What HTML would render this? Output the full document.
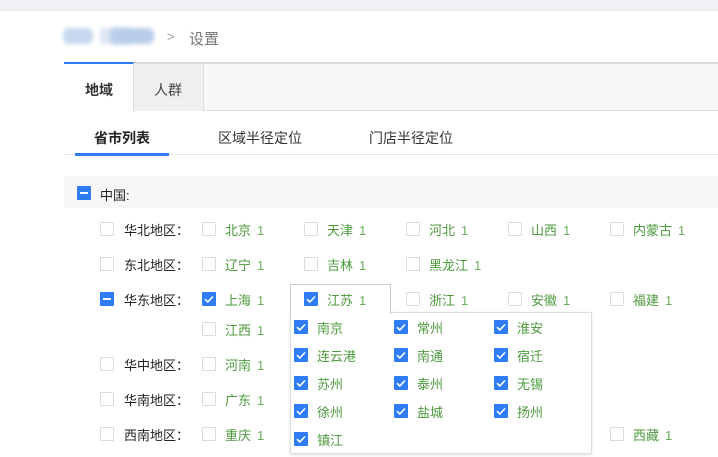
<!DOCTYPE html>
<html><head><meta charset="utf-8">
<style>
*{margin:0;padding:0;box-sizing:border-box}
body{width:718px;height:457px;overflow:hidden;background:#fff;position:relative;font-family:"Liberation Sans","Noto Sans CJK SC",sans-serif;font-size:13px;color:#333}
.a{position:absolute;white-space:nowrap}
.cb{position:absolute;width:14px;height:14px;border:1px solid #dcdcdc;background:#fff;border-radius:1px}
.ck{position:absolute;width:14px;height:14px;background:#2f7df6;border-radius:1px}
.ck svg{position:absolute;left:0;top:0}
.ind{position:absolute;width:14px;height:14px;background:#2f7df6;border-radius:1px}
.ind:after{content:"";position:absolute;left:3px;top:6px;width:8px;height:2px;background:#fff}
.g{color:#4d9a3e}
.n{color:#6ab05a;margin-left:6px}
.lb{color:#222}
</style></head><body>
<div class="a" style="left:0;top:0;width:718px;height:11px;background:#f0f2f5;border-bottom:1px solid #e4e7ed"></div>
<div class="a" style="left:63px;top:28px;width:30px;height:16px;background:#c7d8ee;border-radius:6px;filter:blur(2px)"></div>
<div class="a" style="left:100px;top:28px;width:30px;height:16px;background:#dde6f2;filter:blur(2px)"></div>
<div class="a" style="left:110px;top:28px;width:44px;height:16px;background:#b9cde9;border-radius:6px;filter:blur(2px)"></div>
<div class="a" style="left:167px;top:29px;color:#999;font-size:13px">&gt;</div>
<div class="a" style="left:189px;top:28px;color:#777;font-size:15px">设置</div>
<div class="a" style="left:64px;top:62px;width:654px;height:49px;background:#f7f7f7;border-top:2px solid #d9d9d9;border-bottom:1px solid #ddd"></div>
<div class="a" style="left:64px;top:62px;width:70px;height:50px;background:#fff;border-top:2px solid #2f7df6;border-right:1px solid #ddd"></div>
<div class="a" style="left:134px;top:64px;width:70px;height:47px;background:#efefef;border-right:1px solid #ddd"></div>
<div class="a" style="left:85px;top:80px;font-size:14px;font-weight:bold;color:#333">地域</div>
<div class="a" style="left:154px;top:80px;font-size:14px;color:#444">人群</div>
<div class="a" style="left:64px;top:154px;width:654px;height:1px;background:#e4e4e4"></div>
<div class="a" style="left:75px;top:153px;width:94px;height:3px;background:#2f7df6"></div>
<div class="a" style="left:94px;top:128px;font-size:14px;font-weight:bold;color:#222">省市列表</div>
<div class="a" style="left:218px;top:128px;font-size:14px;color:#333">区域半径定位</div>
<div class="a" style="left:369px;top:128px;font-size:14px;color:#333">门店半径定位</div>
<div class="a" style="left:64px;top:176px;width:654px;height:32px;background:#f7f7f7"></div>
<div class="ind" style="left:77px;top:186px"></div>
<div class="a lb" style="left:100px;top:185px">中国:</div>
<div id="rows"></div>
<script>
var chk='<svg width="14" height="14" viewBox="0 0 14 14"><path d="M3 7.2l2.8 2.8L11 4.5" stroke="#fff" stroke-width="1.6" fill="none"/></svg>';
var h='';
function cb(x,y,t){ if(t==1) return '<div class="ck" style="left:'+x+'px;top:'+y+'px">'+chk+'</div>'; if(t==2) return '<div class="ind" style="left:'+x+'px;top:'+y+'px"></div>'; return '<div class="cb" style="left:'+x+'px;top:'+y+'px"></div>';}
var rows=[[229,'华北地区：',0,['北京','天津','河北','山西','内蒙古']],[264,'东北地区：',0,['辽宁','吉林','黑龙江']],[299,'华东地区：',2,['上海','','浙江','安徽','福建']],[329,'',0,['江西']],[364,'华中地区：',0,['河南']],[399,'华南地区：',0,['广东']],[434,'西南地区：',0,['重庆','','','','西藏']]];
var xs=[202,304,406,508,610];
rows.forEach(function(r){var y=r[0];
 if(r[1]){h+=cb(100,y-7,r[2]);h+='<div class="a lb" style="left:124px;top:'+(y-9)+'px">'+r[1]+'</div>';}
 r[3].forEach(function(p,i){if(!p)return;h+=cb(xs[i],y-7,(y==299&&i==0)?1:0);h+='<div class="a" style="left:'+(xs[i]+23)+'px;top:'+(y-9)+'px"><span class="g">'+p+'</span><span class="n">1</span></div>';});
});
h+='<div class="a" style="left:290px;top:284px;width:101px;height:30px;border:1px solid #ccc;border-bottom:none;background:#fff;z-index:2"></div>';
h+='<div style="position:absolute;z-index:3">'+cb(304,292,1)+'<div class="a" style="left:327px;top:290px"><span class="g">江苏</span><span class="n">1</span></div></div>';
h+='<div class="a" style="left:290px;top:312px;width:302px;height:142px;border:1px solid #ddd;background:#fff;box-shadow:0 1px 3px rgba(0,0,0,.12);z-index:1"></div>';
var cs=[['南京','常州','淮安'],['连云港','南通','宿迁'],['苏州','泰州','无锡'],['徐州','盐城','扬州'],['镇江']];
var pop='';
cs.forEach(function(r,j){var y=327+28*j;r.forEach(function(c,i){var x=294+100*i;pop+=cb(x,y-7,1)+'<div class="a g" style="left:'+(x+23)+'px;top:'+(y-9)+'px">'+c+'</div>';});});
h+='<div style="position:absolute;z-index:4">'+pop+'</div>';
document.getElementById('rows').innerHTML=h;
</script>
</body></html>
